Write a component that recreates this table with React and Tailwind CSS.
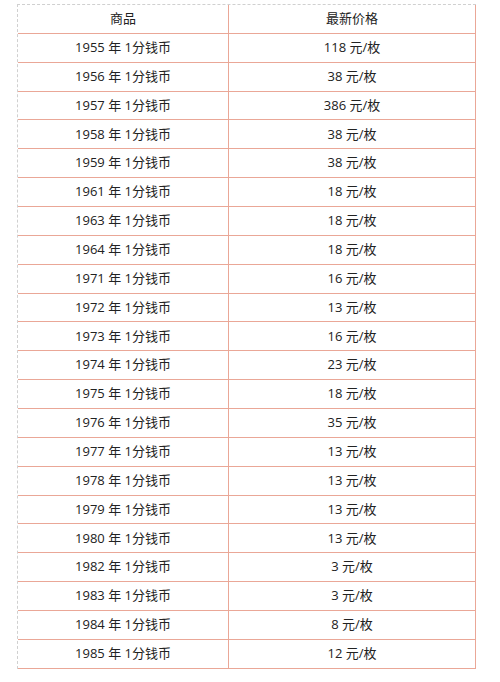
import React from "react";

const rows = [
  ["1955", "118"],
  ["1956", "38"],
  ["1957", "386"],
  ["1958", "38"],
  ["1959", "38"],
  ["1961", "18"],
  ["1963", "18"],
  ["1964", "18"],
  ["1971", "16"],
  ["1972", "13"],
  ["1973", "16"],
  ["1974", "23"],
  ["1975", "18"],
  ["1976", "35"],
  ["1977", "13"],
  ["1978", "13"],
  ["1979", "13"],
  ["1980", "13"],
  ["1982", "3"],
  ["1983", "3"],
  ["1984", "8"],
  ["1985", "12"],
];

const App = () => {
  return (
    <div className="w-[500px] h-[682px] bg-white pt-[4px] pl-[17px]">
      <div
        className="w-[459px] border-t border-l border-dashed border-[#d0d0d0] text-[13px] text-[#222]"
        style={{ fontFamily: '"Open Sans", "Noto Sans CJK SC", sans-serif' }}
      >
        <div className="flex h-[28.8px] border-b border-[#eaa797]">
          <div className="w-[211px] flex items-center justify-center border-r border-[#eaa797]">商品</div>
          <div className="flex-1 flex items-center justify-center border-r border-[#eaa797]">最新价格</div>
        </div>
        {rows.map(([year, price]) => (
          <div key={year} className="flex h-[28.86px] border-b border-[#eaa797]">
            <div className="w-[211px] flex items-center justify-center border-r border-[#eaa797]">
              {year} 年 1分钱币
            </div>
            <div className="flex-1 flex items-center justify-center border-r border-[#eaa797]">
              {price} 元/枚
            </div>
          </div>
        ))}
      </div>
    </div>
  );
};

export default App;
